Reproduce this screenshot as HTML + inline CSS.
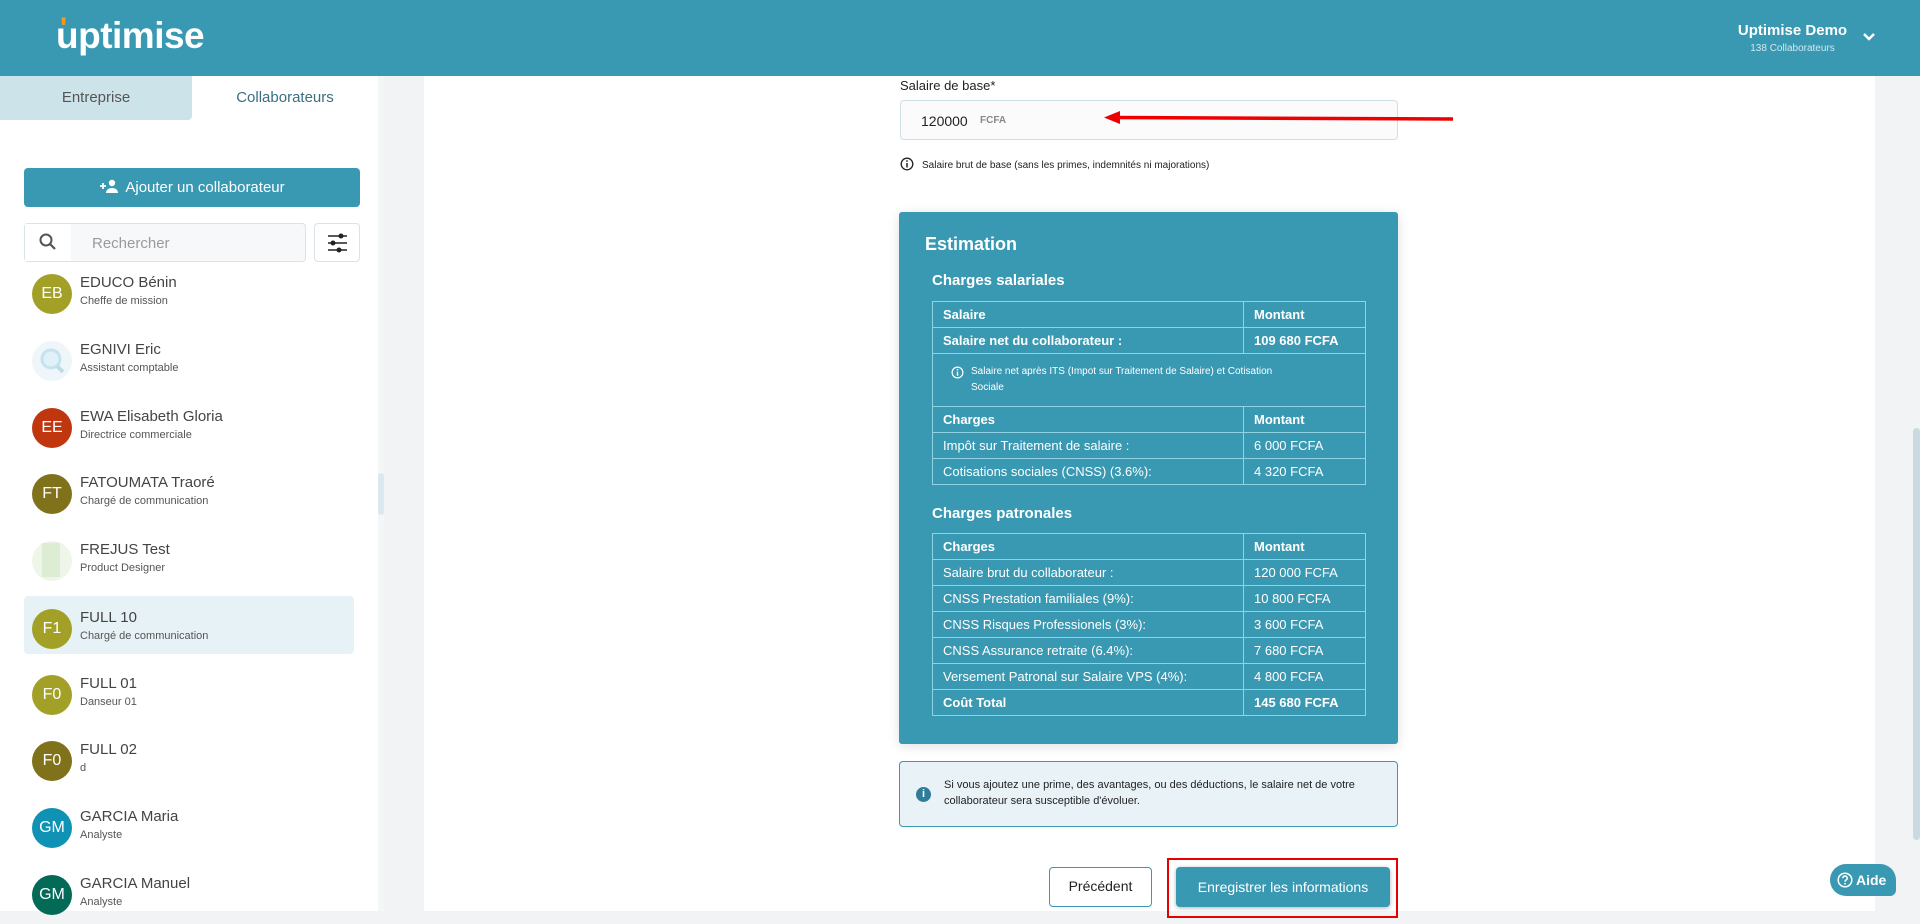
<!DOCTYPE html>
<html><head><meta charset="utf-8">
<style>
*{box-sizing:border-box;margin:0;padding:0}
body{width:1920px;height:911px;overflow:hidden;font-family:"Liberation Sans",sans-serif;background:#f1f3f5;position:relative;color:#333}
.hdr{position:absolute;left:0;top:0;width:1920px;height:76px;background:#3999b3}
.logo{position:absolute;left:56px;top:15px;font-size:37px;font-weight:bold;color:#fff;letter-spacing:-0.5px}
.logo span{color:#f49a1a;position:absolute;left:4px;top:-3px;font-size:30px}
.usr{position:absolute;left:1725px;width:135px;top:22px;text-align:center;color:#fff}
.usr b{display:block;font-size:15px}
.usr small{display:block;font-size:10px;color:#d2e7ee;margin-top:4px}
.chev{position:absolute;left:1862px;top:32px}
.side{position:absolute;left:0;top:76px;width:378px;height:835px;background:#fff}
.track{position:absolute;left:378px;top:76px;width:6px;height:835px;background:#f4f7f8}
.thumb{position:absolute;left:378px;top:473px;width:6px;height:42px;background:#dbe9ee;border-radius:3px}
.tab1{position:absolute;left:0;top:76px;width:192px;height:44px;background:#cde3ea;border-radius:0 0 4px 0;font-size:15px;color:#555;text-align:center;line-height:44px}
.tab2{position:absolute;left:192px;top:76px;width:186px;height:44px;font-size:15px;color:#3a6f82;text-align:center;line-height:44px}
.add{position:absolute;left:24px;top:168px;width:336px;height:39px;background:#3999b3;border-radius:4px;color:#fff;font-size:15px;text-align:center;line-height:39px}
.srch{position:absolute;left:24px;top:223px;width:282px;height:39px;border:1px solid #d9e4e8;border-radius:4px;background:#f7f8f9}
.srch .ic{position:absolute;left:0;top:0;width:46px;height:37px;background:#fff}
.srch .t{position:absolute;left:67px;top:11px;color:#9a9a9a;font-size:15px}
.filt{position:absolute;left:314px;top:223px;width:46px;height:39px;border:1px solid #d9e4e8;border-radius:4px;background:#fff}
.item{position:absolute;left:24px;width:330px;height:58px}
.item.sel{background:#e7f2f7;border-radius:4px}
.av{position:absolute;left:8px;top:9px;width:40px;height:40px;border-radius:50%;color:#fff;font-size:16px;text-align:center;line-height:40px}
.nm{position:absolute;left:56px;top:9px;font-size:15px;color:#444}
.jb{position:absolute;left:56px;top:30px;font-size:11px;color:#555}
.main{position:absolute;left:424px;top:76px;width:1451px;height:835px;background:#fff}
.rtrack{position:absolute;left:1912px;top:76px;width:8px;height:835px;background:#f1f3f5}
.rthumb{position:absolute;left:1913px;top:428px;width:7px;height:412px;background:#c9dbe1;border-radius:4px}
.lbl{position:absolute;left:900px;top:78px;font-size:13px;color:#222}
.inp{position:absolute;left:900px;top:100px;width:498px;height:40px;border:1px solid #cfe0e6;border-radius:4px;background:#fbfbfc}
.inp .v{position:absolute;left:20px;top:12px;font-size:14px;color:#222}
.inp .u{position:absolute;left:79px;top:14px;font-size:10px;color:#888;font-weight:bold}
.hint{position:absolute;left:900px;top:157px;font-size:10px;color:#222}
.card{position:absolute;left:899px;top:212px;width:499px;height:532px;background:#3999b3;border-radius:3px;box-shadow:0 2px 12px rgba(0,0,0,.12);color:#fff}
.card h2{position:absolute;left:26px;top:22px;font-size:18px}
.card h3{position:absolute;left:33px;font-size:15px}
table{position:absolute;left:33px;width:434px;border-collapse:collapse;font-size:13px}
td{border:1.5px solid #8fd3e4;height:26px;padding:0 10px;color:#fff}
td.c2{width:122px}
td.b{font-weight:bold}
.note{font-size:10px;line-height:16px;padding:8px 10px 8px 38px;position:relative;height:53px}
.info{position:absolute;left:899px;top:761px;width:499px;height:66px;background:#e8f2f7;border:1.5px solid #3999b3;border-radius:4px;font-size:11px;color:#222;line-height:16px;padding:15px 20px 0 44px}
.info .d{position:absolute;left:16px;top:25px;width:15px;height:15px;border-radius:50%;background:#2e7d99;color:#fff;font-size:11px;font-weight:bold;text-align:center;line-height:15px}
.prev{position:absolute;left:1049px;top:867px;width:103px;height:40px;border:1.5px solid #3999b3;border-radius:4px;font-size:14px;text-align:center;line-height:37px;color:#222;background:#fff}
.red{position:absolute;left:1167px;top:858px;width:231px;height:60px;border:2px solid #e60000}
.save{position:absolute;left:1176px;top:867px;width:214px;height:40px;background:#3999b3;border-radius:4px;color:#fff;font-size:14px;text-align:center;line-height:40px;box-shadow:0 1px 4px rgba(0,0,0,.3)}
.aide{position:absolute;left:1830px;top:864px;width:66px;height:32px;background:#3999b3;border-radius:16px 16px 6px 16px;color:#fff;font-size:14px;font-weight:bold;line-height:32px;padding-left:7px}
</style></head><body>
<div class="hdr">
<div class="logo"><span>'</span>uptimise</div>
<div class="usr"><b>Uptimise Demo</b><small>138 Collaborateurs</small></div>
<svg class="chev" width="14" height="10" viewBox="0 0 14 10"><path d="M2 2l5 5 5-5" stroke="#fff" stroke-width="2.5" fill="none"/></svg>
</div>
<div class="side"></div>
<div class="track"></div><div class="thumb"></div>
<div class="tab1">Entreprise</div><div class="tab2">Collaborateurs</div>
<div class="add"><svg width="20" height="14" viewBox="0 0 20 14" style="vertical-align:-1px;margin-right:6px"><path d="M1 7h6M4 4v6" stroke="#fff" stroke-width="1.8"/><circle cx="13" cy="4" r="3.2" fill="#fff"/><path d="M7 14c0-3.5 3-5 6-5s6 1.5 6 5z" fill="#fff"/></svg>Ajouter un collaborateur</div>
<div class="srch"><div class="ic"><svg width="46" height="37" viewBox="0 0 46 37"><circle cx="21" cy="16" r="5.5" stroke="#555" stroke-width="2" fill="none"/><path d="M25 20l5 5" stroke="#555" stroke-width="2.2"/></svg></div><div class="t">Rechercher</div></div>
<div class="filt"><svg width="44" height="37" viewBox="0 0 44 37"><path d="M13 12h19M13 19h19M13 26h19" stroke="#222" stroke-width="1.6"/><circle cx="26" cy="12" r="2.5" fill="#222"/><circle cx="18" cy="19" r="2.5" fill="#222"/><circle cx="24" cy="26" r="2.5" fill="#222"/></svg></div>

<div class="item" style="top:265px"><div class="av" style="background:#a3a027">EB</div><div class="nm">EDUCO Bénin</div><div class="jb">Cheffe de mission</div></div>
<div class="item" style="top:332px"><div class="av" style="background:#eef6f9"><svg width="40" height="40"><circle cx="19" cy="18" r="9" stroke="#c5e3ef" stroke-width="3" fill="#e2f1f7"/><path d="M25 25l6 6" stroke="#bcdce8" stroke-width="4"/></svg></div><div class="nm">EGNIVI Eric</div><div class="jb">Assistant comptable</div></div>
<div class="item" style="top:399px"><div class="av" style="background:#c0360f">EE</div><div class="nm">EWA Elisabeth Gloria</div><div class="jb">Directrice commerciale</div></div>
<div class="item" style="top:465px"><div class="av" style="background:#80721a">FT</div><div class="nm">FATOUMATA Traoré</div><div class="jb">Chargé de communication</div></div>
<div class="item" style="top:532px"><div class="av" style="background:#eef6ea"><div style="position:absolute;left:10px;top:2px;width:18px;height:34px;background:#dcedd3"></div></div><div class="nm">FREJUS Test</div><div class="jb">Product Designer</div></div>
<div class="item sel" style="top:596px"><div class="av" style="background:#a3a027;top:13px">F1</div><div class="nm" style="top:13px">FULL 10</div><div class="jb" style="top:34px">Chargé de communication</div></div>
<div class="item" style="top:666px"><div class="av" style="background:#a3a027">F0</div><div class="nm">FULL 01</div><div class="jb">Danseur 01</div></div>
<div class="item" style="top:732px"><div class="av" style="background:#80721a">F0</div><div class="nm">FULL 02</div><div class="jb">d</div></div>
<div class="item" style="top:799px"><div class="av" style="background:#0f92b3">GM</div><div class="nm">GARCIA Maria</div><div class="jb">Analyste</div></div>
<div class="item" style="top:866px"><div class="av" style="background:#036a58">GM</div><div class="nm">GARCIA Manuel</div><div class="jb">Analyste</div></div>

<div class="main"></div>
<div class="rtrack"></div><div class="rthumb"></div>

<div class="lbl">Salaire de base*</div>
<div class="inp"><div class="v">120000</div><div class="u">FCFA</div></div>
<svg style="position:absolute;left:1100px;top:108px" width="360" height="20" viewBox="0 0 360 20"><path d="M14 9.5L353 11" stroke="#e00" stroke-width="3.5"/><path d="M4 9.5L20 3v13z" fill="#e00"/></svg>
<div class="hint"><svg width="14" height="14" viewBox="0 0 14 14" style="vertical-align:-3px;margin-right:8px"><circle cx="7" cy="7" r="5.8" stroke="#222" stroke-width="1.3" fill="none"/><path d="M7 6v4.5" stroke="#222" stroke-width="1.5"/><circle cx="7" cy="4" r=".9" fill="#222"/></svg>Salaire brut de base (sans les primes, indemnités ni majorations)</div>

<div class="card">
<h2>Estimation</h2>
<h3 style="top:60px">Charges salariales</h3>
<table style="top:89px">
<tr><td class="b">Salaire</td><td class="c2 b">Montant</td></tr>
<tr><td class="b">Salaire net du collaborateur :</td><td class="c2 b">109 680 FCFA</td></tr>
<tr><td colspan="2" class="note"><svg width="13" height="13" viewBox="0 0 14 14" style="position:absolute;left:18px;top:12px"><circle cx="7" cy="7" r="5.8" stroke="#fff" stroke-width="1.3" fill="none"/><path d="M7 6v4.5" stroke="#fff" stroke-width="1.5"/><circle cx="7" cy="4" r=".9" fill="#fff"/></svg>Salaire net après ITS (Impot sur Traitement de Salaire) et Cotisation<br>Sociale</td></tr>
<tr><td class="b">Charges</td><td class="c2 b">Montant</td></tr>
<tr><td>Impôt sur Traitement de salaire :</td><td class="c2">6 000 FCFA</td></tr>
<tr><td>Cotisations sociales (CNSS) (3.6%):</td><td class="c2">4 320 FCFA</td></tr>
</table>
<h3 style="top:293px">Charges patronales</h3>
<table style="top:321px">
<tr><td class="b">Charges</td><td class="c2 b">Montant</td></tr>
<tr><td>Salaire brut du collaborateur :</td><td class="c2">120 000 FCFA</td></tr>
<tr><td>CNSS Prestation familiales (9%):</td><td class="c2">10 800 FCFA</td></tr>
<tr><td>CNSS Risques Professionels (3%):</td><td class="c2">3 600 FCFA</td></tr>
<tr><td>CNSS Assurance retraite (6.4%):</td><td class="c2">7 680 FCFA</td></tr>
<tr><td>Versement Patronal sur Salaire VPS (4%):</td><td class="c2">4 800 FCFA</td></tr>
<tr><td class="b">Coût Total</td><td class="c2 b">145 680 FCFA</td></tr>
</table>
</div>

<div class="info"><div class="d">i</div>Si vous ajoutez une prime, des avantages, ou des déductions, le salaire net de votre collaborateur sera susceptible d'évoluer.</div>

<div class="prev">Précédent</div>
<div class="red"></div>
<div class="save">Enregistrer les informations</div>
<div class="aide"><svg width="16" height="16" viewBox="0 0 16 16" style="vertical-align:-3px;margin-right:3px"><circle cx="8" cy="8" r="6.8" stroke="#fff" stroke-width="1.5" fill="none"/><path d="M5.8 6.2a2.2 2.2 0 1 1 3 2c-.7.3-.8.7-.8 1.5" stroke="#fff" stroke-width="1.5" fill="none"/><circle cx="8" cy="11.8" r=".9" fill="#fff"/></svg>Aide</div>
</body></html>
